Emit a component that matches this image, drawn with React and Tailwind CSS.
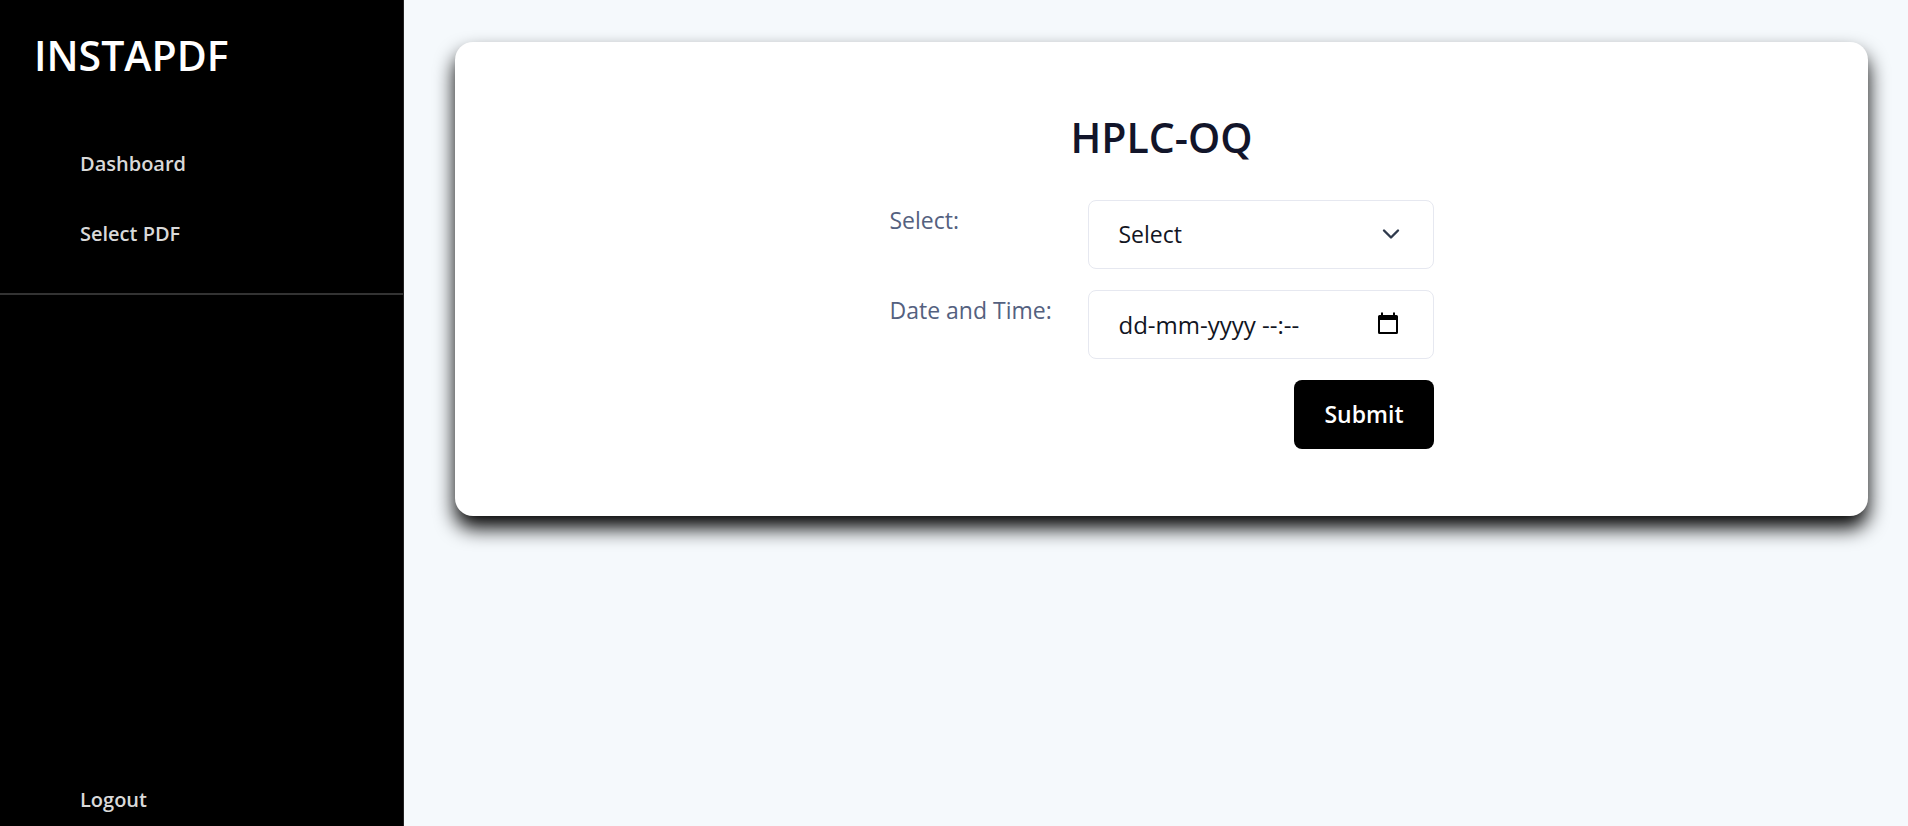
import React from "react";

const navItems = [
  { label: "Dashboard", href: "#dashboard" },
  { label: "Select PDF", href: "#select-pdf" },
];

const navLink = "block px-20 py-5 text-[20px] leading-[30px] font-semibold text-[#d9d9d9]";
const fieldBox =
  "h-[69px] w-full rounded-lg border border-[#e6e8f0] bg-white pl-[30px] text-[#12151f] outline-none";

function Sidebar() {
  return (
    <aside className="flex w-[404px] shrink-0 flex-col border-r border-[#222] bg-black">
      <h1 className="px-[34px] pt-6 text-[41px] leading-[62px] font-semibold text-white">INSTAPDF</h1>
      <nav className="mt-[43px] border-b-2 border-[#333] pb-6">
        {navItems.map((item) => (
          <a key={item.label} href={item.href} className={navLink}>
            {item.label}
          </a>
        ))}
      </nav>
      <a href="#logout" className="mt-auto block px-20 pb-[11px] text-[20px] leading-[30px] font-semibold text-[#d9d9d9]">
        Logout
      </a>
    </aside>
  );
}

function ReportForm() {
  return (
    <form className="grid grid-cols-[198px_346px] gap-y-[21px]" onSubmit={(e) => e.preventDefault()}>
      <label htmlFor="report" className="text-[23px] leading-[40px] text-[#54617f]">
        Select:
      </label>
      <div className="relative">
        <select id="report" className={`${fieldBox} appearance-none text-[23px]`}>
          <option>Select</option>
        </select>
        <svg
          className="pointer-events-none absolute top-[22px] right-[31px] size-6"
          viewBox="0 0 24 24"
          fill="none"
          stroke="#2f3a4c"
          strokeWidth="2.4"
          strokeLinecap="round"
          strokeLinejoin="round"
        >
          <path d="M5 8.500l7 7 7-7" />
        </svg>
      </div>

      <label htmlFor="datetime" className="text-[23px] leading-[40px] text-[#54617f]">
        Date and Time:
      </label>
      <div className="relative">
        <input id="datetime" type="text" defaultValue="dd-mm-yyyy --:--" className={`${fieldBox} text-[24px]`} />
        <button type="button" aria-label="Open calendar" className="absolute top-[22px] right-[34px]">
          <svg className="size-6" viewBox="0 0 24 24" fill="black">
            <path
              fillRule="evenodd"
              d="M5 .5h2V3h10V.5h2V3h1.500A1.500 1.500 0 0 1 22 4.500V20.500a1.500 1.500 0 0 1-1.500 1.500h-17A1.500 1.500 0 0 1 2 20.500V4.500A1.500 1.500 0 0 1 3.500 3H5zM4 8v12h16V8z"
            />
          </svg>
        </button>
      </div>

      <button
        type="submit"
        className="col-start-2 h-[69px] justify-self-end rounded-lg bg-black px-[30px] text-[23px] font-semibold text-white"
      >
        Submit
      </button>
    </form>
  );
}

export default function App() {
  return (
    <div className="flex min-h-screen bg-[#f5f9fc] font-['Open_Sans','Noto_Sans',sans-serif]">
      <Sidebar />
      <main className="flex-1 pt-[42px] pr-10 pl-[51px]">
        <section className="flex flex-col items-center rounded-[18px] bg-white pt-16 pb-[67px] shadow-[0_12px_20px_0_#000]">
          <h2 className="mb-8 text-[41px] leading-[62px] font-semibold text-[#12152a]">HPLC-OQ</h2>
          <ReportForm />
        </section>
      </main>
    </div>
  );
}
